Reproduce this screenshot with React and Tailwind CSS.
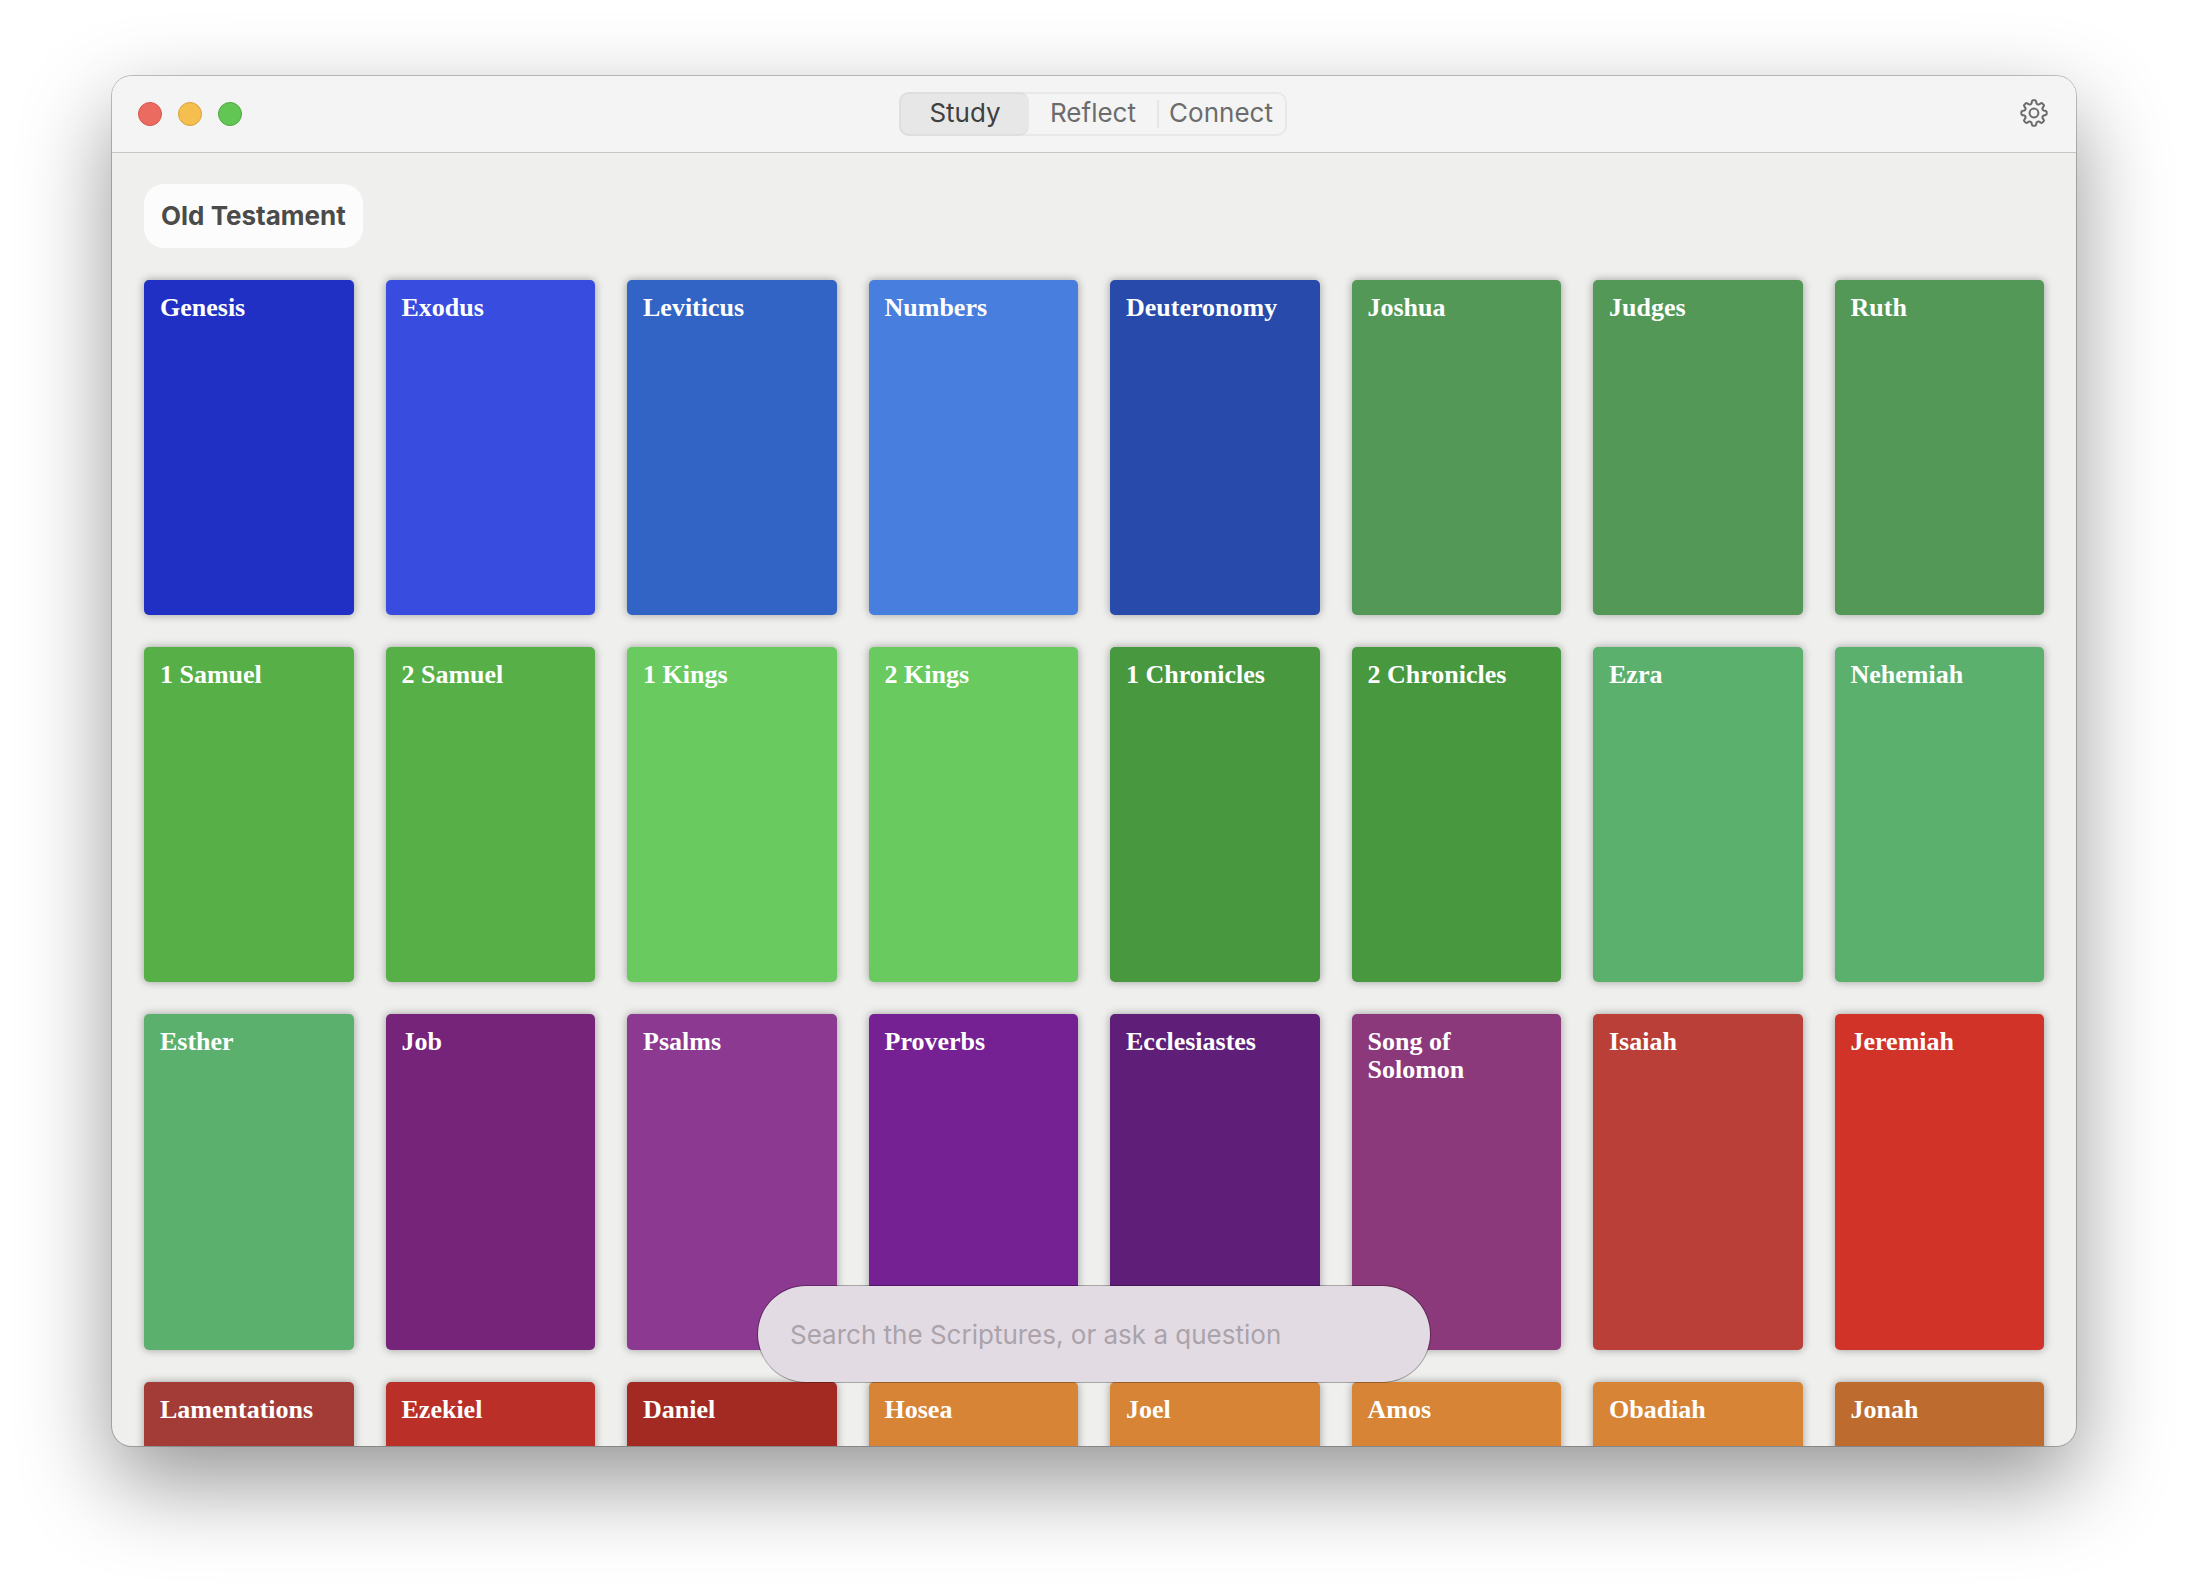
import { useState } from "react";

const books = [
  ["Genesis", "bg-[#2030c4]"], ["Exodus", "bg-[#384cdf]"], ["Leviticus", "bg-[#3164c5]"], ["Numbers", "bg-[#487ede]"],
  ["Deuteronomy", "bg-[#284bab]"], ["Joshua", "bg-[#539856]"], ["Judges", "bg-[#539856]"], ["Ruth", "bg-[#539856]"],
  ["1 Samuel", "bg-[#57b047]"], ["2 Samuel", "bg-[#57b047]"], ["1 Kings", "bg-[#69ca5f]"], ["2 Kings", "bg-[#69ca5f]"],
  ["1 Chronicles", "bg-[#489840]"], ["2 Chronicles", "bg-[#489840]"], ["Ezra", "bg-[#5cb06e]"], ["Nehemiah", "bg-[#5cb06e]"],
  ["Esther", "bg-[#5cb06e]"], ["Job", "bg-[#76237a]"], ["Psalms", "bg-[#8c3992]"], ["Proverbs", "bg-[#752193]"],
  ["Ecclesiastes", "bg-[#5f1f79]"], ["Song of Solomon", "bg-[#8c397b]"], ["Isaiah", "bg-[#ba3f38]"], ["Jeremiah", "bg-[#d13329]"],
  ["Lamentations", "bg-[#a33b37]"], ["Ezekiel", "bg-[#ba2f27]"], ["Daniel", "bg-[#a22a23]"], ["Hosea", "bg-[#d78436]"],
  ["Joel", "bg-[#d78436]"], ["Amos", "bg-[#d78436]"], ["Obadiah", "bg-[#d78436]"], ["Jonah", "bg-[#be6b2f]"],
];

// Outline of an eight-toothed gear centred on the origin.
const gearPath = (() => {
  const pts = [];
  const at = (r, deg) => {
    const a = (deg * Math.PI) / 180;
    return `${(r * Math.sin(a)).toFixed(2)} ${(-r * Math.cos(a)).toFixed(2)}`;
  };
  for (let i = 0; i < 8; i++) {
    const c = i * 45;
    pts.push(`${i ? "L" : "M"}${at(9.8, c - 15)}`);
    pts.push(`L${at(11.4, c - 11)}`);
    pts.push(`Q${at(12.7, c - 9)} ${at(12.7, c - 5)}`);
    pts.push(`L${at(12.7, c + 5)}`);
    pts.push(`Q${at(12.7, c + 9)} ${at(11.4, c + 11)}`);
    pts.push(`L${at(9.8, c + 15)}`);
    pts.push(`Q${at(8.8, c + 22.5)} ${at(9.8, c + 30)}`);
  }
  return pts.join("") + "Z";
})();

function GearIcon() {
  return (
    <svg viewBox="-14 -14 28 28" className="size-7" fill="none" stroke="currentColor" strokeWidth="2" strokeLinejoin="round" aria-hidden="true">
      <path d={gearPath} />
      <circle r="4.4" />
    </svg>
  );
}

function TitleBar({ tab, onTab }) {
  return (
    <header className="grid h-[77px] shrink-0 grid-cols-[1fr_auto_1fr] items-center border-b border-[#c6c6c5] bg-[#f4f4f4] pr-7 pl-[26px]">
      <div className="flex gap-4">
        <button aria-label="Close" className="size-6 rounded-full border border-[#d5564c] bg-[#ec6b60]" />
        <button aria-label="Minimize" className="size-6 rounded-full border border-[#d9a13f] bg-[#f5bf4f]" />
        <button aria-label="Zoom" className="size-6 rounded-full border border-[#4ea73d] bg-[#62c655]" />
      </div>
      <div role="tablist" className="grid h-11 w-[388px] grid-cols-3 rounded-[10px] border-2 border-[#e8e8e8] text-[26px] leading-9 text-[#6c6c6c]">
        {["Study", "Reflect", "Connect"].map((name) => (
          <button
            key={name}
            role="tab"
            aria-selected={tab === name}
            onClick={() => onTab(name)}
            className={
              tab === name
                ? "-my-0.5 -ml-0.5 rounded-[10px] border-2 border-r-0 border-[#dedede] bg-[#e7e7e7] pb-0.5 text-[#404040]"
                : "relative pb-0.5 last:before:absolute last:before:top-1.5 last:before:left-0 last:before:h-7 last:before:w-0.5 last:before:bg-[#e6e6e6]"
            }
          >
            {name}
          </button>
        ))}
      </div>
      <button aria-label="Settings" className="justify-self-end pb-0.5 text-[#6a6a6a]">
        <GearIcon />
      </button>
    </header>
  );
}

function Book({ name, color }) {
  return (
    <button
      className={`flex aspect-5/8 items-start rounded-[5px] px-4 pt-3.5 text-left font-['Liberation_Serif',serif] text-[26px] leading-7 font-bold text-white shadow-[0_0_8px_rgba(0,0,0,0.35)] ${color}`}
    >
      {name}
    </button>
  );
}

export default function App() {
  const [tab, setTab] = useState("Study");
  return (
    <div className="flex h-screen flex-col overflow-hidden bg-white px-28 pt-[76px] pb-[148px] font-[Inter,sans-serif]">
      <div className="relative flex min-h-0 flex-1 flex-col overflow-hidden rounded-[20px] bg-[#efefed] shadow-[0_0_0_1px_rgba(0,0,0,0.22),0_36px_90px_rgba(0,0,0,0.42)]">
        <TitleBar tab={tab} onTab={setTab} />
        <main className="flex-1 overflow-y-auto px-8 pt-[31px] [scrollbar-width:none]">
          <h1 className="w-fit rounded-[20px] bg-[#fcfcfc] px-[17px] py-4 text-[26px] leading-8 font-bold text-[#4b4b4b]">
            Old Testament
          </h1>
          <div className="mt-8 grid grid-cols-8 gap-8">
            {books.map(([name, color]) => (
              <Book key={name} name={name} color={color} />
            ))}
          </div>
        </main>
        <div className="pointer-events-none absolute inset-x-0 bottom-16 flex justify-center">
          <input
            type="text"
            aria-label="Search the Scriptures, or ask a question"
            placeholder="Search the Scriptures, or ask a question"
            className="pointer-events-auto h-24 w-[672px] rounded-full bg-[#e3dbe3] px-8 text-[26px] text-[#404040] shadow-[0_0_0_1px_rgba(0,0,0,0.3)] outline-none placeholder:text-[#aaa3aa]"
          />
        </div>
      </div>
    </div>
  );
}
